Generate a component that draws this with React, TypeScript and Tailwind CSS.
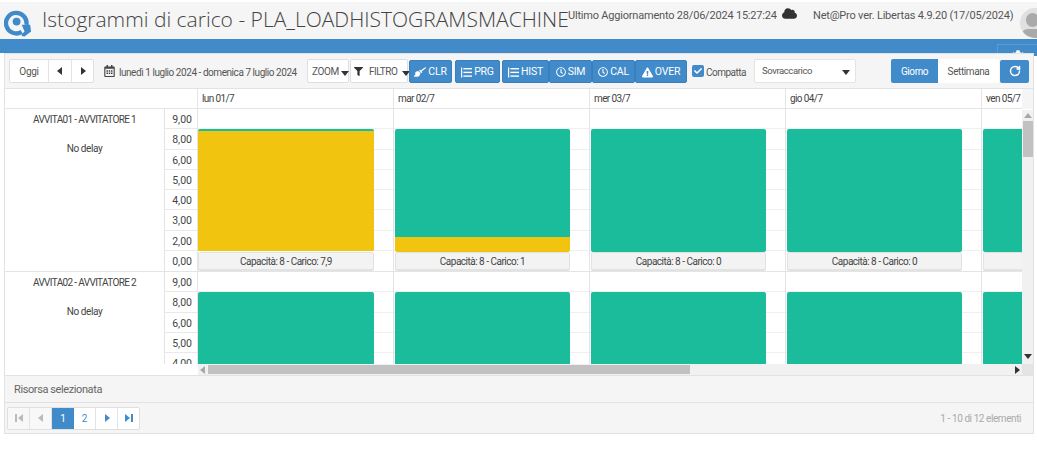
import { RotateCw } from 'lucide-react';
import { FaBroom, FaCheck, FaCloud, FaCog, FaExclamationTriangle, FaFilter, FaRegCalendarAlt, FaRegClock } from 'react-icons/fa';

const Caret = ({ dir = 'down', className = '' }: { dir?: 'down' | 'left' | 'right' | 'up'; className?: string }) => {
  const pts = { down: '0,1 8,1 4,6', up: '0,6 8,6 4,1', left: '6,0 6,8 1,4', right: '2,0 2,8 7,4' }[dir];
  return (
    <svg width="8" height="8" viewBox="0 0 8 8" className={`shrink-0 ${className}`}>
      <polygon points={pts} fill="currentColor" />
    </svg>
  );
};

const SeekIcon = ({ end = false }: { end?: boolean }) => (
  <svg width="8" height="8" viewBox="0 0 8 8" fill="currentColor">
    {end ? <polygon points="0,0 0,8 5,4" /> : <polygon points="8,0 8,8 3,4" />}
    <rect x={end ? 6 : 0} y="0" width="2" height="8" />
  </svg>
);

const ListIcon = () => (
  <svg width="11" height="11" viewBox="0 0 11 11" fill="currentColor" className="shrink-0">
    <rect x="0" y="0.5" width="1.2" height="10" />
    <rect x="2.4" y="1" width="8.6" height="1.4" />
    <rect x="2.4" y="4.7" width="8.6" height="1.4" />
    <rect x="2.4" y="8.4" width="8.6" height="1.4" />
  </svg>
);

const Logo = () => (
  <svg width="28" height="28" viewBox="0 0 30 30" className="shrink-0">
    <path d="M19 24.5 A11 11 0 1 1 24 17" fill="none" stroke="#3f8ac9" strokeWidth="4.6" />
    <circle cx="13.5" cy="13.5" r="4.2" fill="#3f8ac9" />
    <polygon points="19,17 28,17 29,24 22,29.5 19,29 19,27 22,24" fill="#3f8ac9" />
  </svg>
);

function ToolButton({ icon, label, className = '' }: { icon: React.ReactNode; label: string; className?: string }) {
  return (
    <button className={`h-[23px] pt-[2px] shrink-0 bg-[#428bca] border border-[#3a7fb9] rounded-[2px] text-white text-[10.5px] tracking-[-0.2px] flex items-center justify-center gap-[2px] ${className}`}>
      {icon}
      {label}
    </button>
  );
}

const scale = ['9,00', '8,00', '6,00', '5,00', '4,00', '3,00', '2,00', '0,00'];

type Day = { yellow: number; green: number; label: string };

const days: Day[] = [
  { yellow: 120, green: 2, label: 'Capacità: 8 - Carico: 7,9' },
  { yellow: 15, green: 108, label: 'Capacità: 8 - Carico: 1' },
  { yellow: 0, green: 123, label: 'Capacità: 8 - Carico: 0' },
  { yellow: 0, green: 123, label: 'Capacità: 8 - Carico: 0' },
  { yellow: 0, green: 123, label: '' },
];

function Resource({ name, data }: { name: string; data: Day[] }) {
  return (
    <div className="flex h-[163px] shrink-0 border-b border-[#e4e4e4]">
      <div className="w-[159px] shrink-0 text-center text-[10px] text-[#444] pt-[2px]">
        <div className="h-[17px] leading-[17px] tracking-[-0.65px]">{name}</div>
        <div className="mt-[12px] leading-[17px] tracking-[-0.4px]">No delay</div>
      </div>
      <div className="w-[33px] shrink-0 border-l border-[#e4e4e4]">
        {scale.map((s) => (
          <div key={s} className="h-[20.3px] border-b border-[#e9e9e9] last:border-b-0 text-[10.5px] text-[#444] text-right pr-[5px] leading-[21px]">
            {s}
          </div>
        ))}
      </div>
      {data.map((d, i) => (
        <div key={i} className={`w-[196px] shrink-0 border-l border-[#e4e4e4] relative flex flex-col pr-[19px] pt-[20px] ${i > 0 ? 'pl-px' : ''}`}>
          <div className="absolute inset-0 flex flex-col">
            {scale.map((s) => (
              <div key={s} className="h-[20.3px] border-b border-[#efefef] last:border-b-0" />
            ))}
          </div>
          <div className="relative flex flex-col h-[123px] rounded-[2px] overflow-hidden">
            <div className="bg-[#1abc9c]" style={{ height: d.green }} />
            <div className="bg-[#f1c40f]" style={{ height: d.yellow }} />
          </div>
          <div className="relative h-[19px] bg-[#f3f3f3] border border-[#e2e2e2] border-b-2 rounded-[2px] text-[10px] tracking-[-0.5px] text-[#444] text-center leading-[17px] whitespace-nowrap">
            {d.label}
          </div>
        </div>
      ))}
    </div>
  );
}

export default function App() {
  return (
    <div className="w-[1037px] h-[463px] overflow-hidden bg-white relative font-['Roboto',sans-serif] text-[#555]">
      {/* Top bar */}
      <div className="h-[39px] bg-[#f5f5f5] border-t-2 border-white flex items-start relative">
        <div className="ml-[4px] mt-[7px] w-[34px] shrink-0"><Logo /></div>
        <h1 className="ml-[4px] mt-[1px] text-[21px] font-light font-['Open_Sans',sans-serif] leading-[32px] text-[#444] whitespace-nowrap w-[526px] shrink-0">
          Istogrammi di carico - PLA_LOADHISTOGRAMSMACHINE
        </h1>
        <span className="mt-[6px] w-[206px] shrink-0 text-[11px] tracking-[-0.2px] leading-[15px] whitespace-nowrap text-[#555]">Ultimo Aggiornamento 28/06/2024 15:27:24</span>
        <FaCloud className="ml-[8px] mt-[4px] text-[#333] w-[15px] h-[15px] shrink-0" />
        <span className="ml-[16px] mt-[6px] text-[11px] tracking-[-0.2px] leading-[15px] whitespace-nowrap text-[#555] shrink-0">Net@Pro ver. Libertas 4.9.20 (17/05/2024)</span>
        <div className="absolute left-[1020px] top-[6px] w-[30px] h-[30px] rounded-full bg-[#e0e0e0] overflow-hidden">
          <div className="absolute left-[6px] top-[5px] w-[13px] h-[14px] rounded-full bg-[#aaa]" />
          <div className="absolute left-[1px] top-[21px] w-[24px] h-[14px] rounded-full bg-[#aaa]" />
        </div>
      </div>

      {/* Blue band */}
      <div className="h-[14px] bg-[#428bca]" />
      <div className="absolute left-[997px] top-[44px] w-[40px] h-[12px] bg-[#428bca] border-l border-t border-[#5a9bd3] flex justify-center pt-[5px]">
        <FaCog className="w-[14px] h-[14px] text-white shrink-0" />
      </div>

      {/* Main panel */}
      <div className="relative ml-[4px] w-[1030px] bg-[#f5f5f5] border border-[#e2e2e2] flex flex-col h-[381px]">
        {/* Toolbar */}
        <div className="h-[34px] shrink-0 flex items-center pl-[4px] text-[10px] text-[#555]">
          <div className="flex h-[24px] shrink-0 bg-white border border-[#dfdfdf] rounded-[2px]">
            <span className="w-[39px] pt-px flex items-center justify-center border-r border-[#e4e4e4] tracking-[-0.3px]">Oggi</span>
            <span className="w-[23px] flex items-center justify-center border-r border-[#e4e4e4]"><Caret dir="left" className="text-[#333]" /></span>
            <span className="w-[21px] flex items-center justify-center"><Caret dir="right" className="text-[#333]" /></span>
          </div>
          <FaRegCalendarAlt className="ml-[10px] w-[11px] h-[12px] text-[#444] shrink-0" />
          <span className="ml-[4px] mt-[2px] w-[188px] shrink-0 tracking-[-0.45px] whitespace-nowrap">lunedì 1 luglio 2024 - domenica 7 luglio 2024</span>
          <div className="h-[24px] w-[42px] pt-px shrink-0 bg-white border border-[#dfdfdf] rounded-[2px] flex items-center pl-[4px] gap-[2px] tracking-[-0.4px]">
            ZOOM<Caret className="text-[#333] mt-[5px]" />
          </div>
          <div className="h-[24px] w-[58px] pt-px shrink-0 ml-px bg-white border border-[#dfdfdf] rounded-[2px] flex items-center pl-[3px] tracking-[-0.5px]">
            <FaFilter className="w-[9px] h-[9px] text-[#333] shrink-0" />
            <span className="ml-[6px]">FILTRO</span>
            <Caret className="text-[#333] mt-[5px] ml-[5px]" />
          </div>
          <ToolButton className="w-[43px] ml-px" icon={<FaBroom className="w-[12px] h-[12px] shrink-0" />} label="CLR" />
          <ToolButton className="w-[45px] ml-[3px]" icon={<ListIcon />} label="PRG" />
          <ToolButton className="w-[47px] ml-[2px]" icon={<ListIcon />} label="HIST" />
          <ToolButton className="w-[43px]" icon={<FaRegClock className="w-[10px] h-[10px] shrink-0" />} label="SIM" />
          <ToolButton className="w-[43px]" icon={<FaRegClock className="w-[10px] h-[10px] shrink-0" />} label="CAL" />
          <ToolButton className="w-[52px]" icon={<FaExclamationTriangle className="w-[11px] h-[11px] shrink-0" />} label="OVER" />
          <span className="ml-[5px] w-[12px] h-[12px] shrink-0 bg-[#428bca] rounded-[2px] flex items-center justify-center text-white"><FaCheck className="w-[8px] h-[8px]" /></span>
          <span className="ml-[2px] mt-[2px] w-[48px] shrink-0 whitespace-nowrap tracking-[-0.5px]">Compatta</span>
          <div className="w-[102px] h-[24px] pt-px shrink-0 bg-white border border-[#e4e4e4] rounded-[2px] flex items-center justify-between pl-[7px] pr-[5px] text-[9.5px] tracking-[-0.4px]">
            Sovraccarico<Caret className="text-[#333] mt-[3px]" />
          </div>
          <div className="ml-[35px] flex h-[24px] shrink-0 rounded-[2px] overflow-hidden bg-white tracking-[-0.4px]">
            <span className="w-[47px] pt-px bg-[#428bca] text-white flex items-center justify-center">Giorno</span>
            <span className="w-[61px] pt-px flex items-center justify-center">Settimana</span>
          </div>
          <span className="ml-px w-[29px] h-[23px] shrink-0 bg-[#428bca] rounded-[2px] text-white flex items-center justify-center"><RotateCw className="w-[12px] h-[12px]" strokeWidth={3} /></span>
        </div>

        {/* Grid with scroll */}
        <div className="h-[287px] shrink-0 bg-white relative overflow-hidden border-t border-[#e2e2e2]">
          <div className="h-[20px] flex border-b border-[#e4e4e4] text-[10px] tracking-[-0.6px] text-[#444] leading-[20px]">
            <div className="w-[192px] shrink-0" />
            {['lun 01/7', 'mar 02/7', 'mer 03/7', 'gio 04/7', 'ven 05/7'].map((d) => (
              <div key={d} className="w-[196px] shrink-0 border-l border-[#e4e4e4] pl-[4px] whitespace-nowrap">{d}</div>
            ))}
          </div>
          <div className="h-[255px] overflow-hidden w-[1018px]">
            <Resource name="AVVITA01 - AVVITATORE 1" data={days} />
            <Resource
              name="AVVITA02 - AVVITATORE 2"
              data={days.map((d) => ({ yellow: 0, green: 123, label: d.label }))}
            />
          </div>
          {/* scroll bars */}
          <div className="absolute right-0 top-0 h-[20px] w-[11px] bg-[#f5f5f5]" />
          <div className="absolute right-0 top-[21px] bottom-0 w-[11px] bg-[#f1f1f1] flex flex-col items-center">
            <Caret dir="up" className="text-[#a8a8a8] mt-[2px]" />
            <div className="w-[10px] h-[36px] mt-[1px] bg-[#c1c1c1]" />
            <div className="flex-1" />
            <Caret className="text-[#333] mb-[14px]" />
          </div>
          <div className="absolute left-[193px] right-[11px] bottom-0 h-[11px] bg-[#f1f1f1] flex items-center">
            <Caret dir="left" className="text-[#a8a8a8] ml-px" />
            <div className="ml-[1px] w-[482px] h-[9px] bg-[#c1c1c1]" />
            <div className="flex-1" />
            <Caret dir="right" className="text-[#333] mr-[1px]" />
          </div>
          <div className="absolute right-0 bottom-0 w-[11px] h-[11px] bg-[#e4e4e4]" />
        </div>

        <div className="h-[28px] pt-[2px] shrink-0 border-t border-[#e2e2e2] border-b pl-[9px] flex items-center text-[11px] tracking-[-0.4px] text-[#666]">Risorsa selezionata</div>

        {/* Pager */}
        <div className="flex-1 flex items-center px-[2px] text-[10px]">
          <div className="flex h-[23px] bg-white border border-[#dfdfdf] rounded-[2px] text-[#428bca]">
            <span className="w-[22px] flex items-center justify-center border-r border-[#e4e4e4] text-[#bbb] bg-[#f8f8f8]"><SeekIcon /></span>
            <span className="w-[22px] flex items-center justify-center border-r border-[#e4e4e4] text-[#bbb] bg-[#f8f8f8]"><Caret dir="left" /></span>
            <span className="w-[22px] bg-[#428bca] text-white flex items-center justify-center">1</span>
            <span className="w-[22px] flex items-center justify-center border-r border-[#e4e4e4]">2</span>
            <span className="w-[22px] flex items-center justify-center border-r border-[#e4e4e4]"><Caret dir="right" /></span>
            <span className="w-[21px] flex items-center justify-center"><SeekIcon end /></span>
          </div>
          <span className="ml-auto mr-[10px] tracking-[-0.43px] text-[#aaa]">1 - 10 di 12 elementi</span>
        </div>
      </div>
    </div>
  );
}
